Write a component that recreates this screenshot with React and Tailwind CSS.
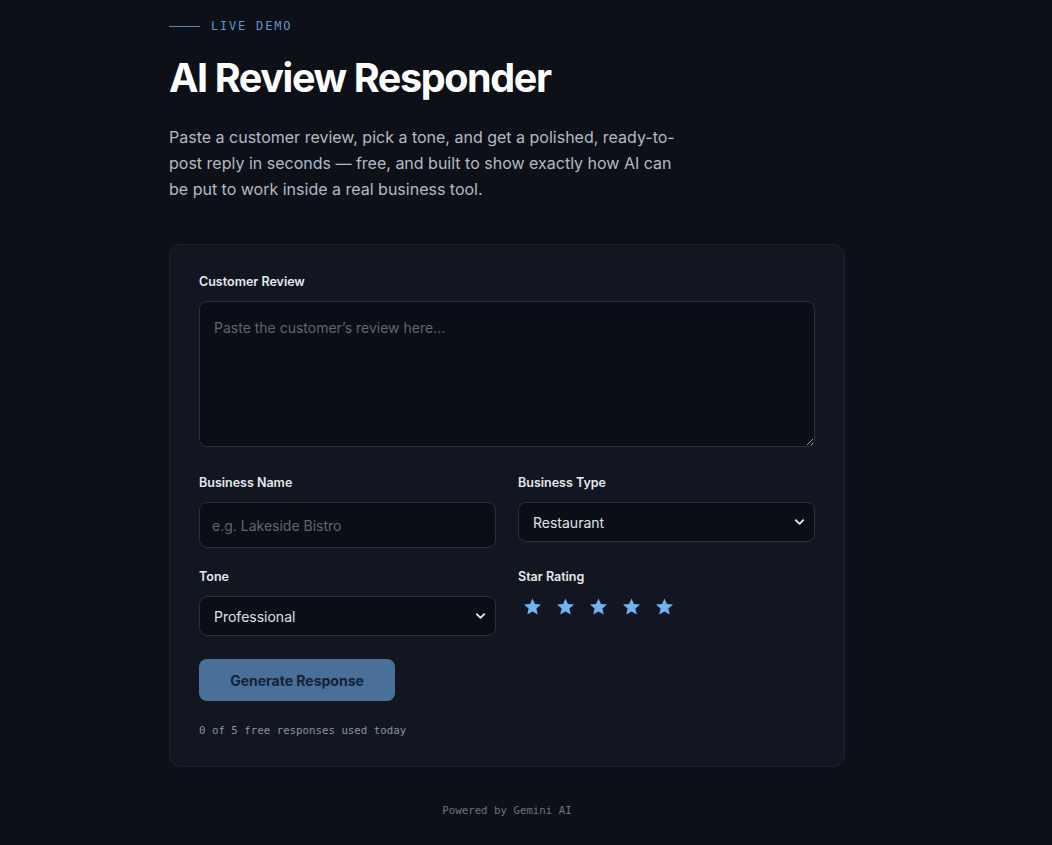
import React, { useState } from "react";
import { ChevronDown } from "lucide-react";

const sans = "font-['Inter','Noto_Sans',sans-serif]";
const mono = "font-['DejaVu_Sans_Mono','Liberation_Mono',monospace]";

function Field({ label, children }) {
  return (
    <div className="flex flex-col">
      <label className="text-[12.5px] font-semibold text-[#e6e9ee] mb-[10px] leading-[18px]">
        {label}
      </label>
      {children}
    </div>
  );
}

function Select({ value, options }) {
  return (
    <div className="relative">
      <select
        defaultValue={value}
        className="w-full h-[40px] appearance-none rounded-lg border border-[#2a303b] bg-[#0b0e14] pl-[14px] pr-8 text-[14px] text-[#dfe3e9] outline-none"
      >
        {options.map((o) => (
          <option key={o}>{o}</option>
        ))}
      </select>
      <ChevronDown
        size={15}
        strokeWidth={3}
        className="pointer-events-none absolute right-[8px] top-1/2 -translate-y-1/2 text-[#e6e9ee]"
      />
    </div>
  );
}

function Stars({ rating = 5 }) {
  return (
    <div className="flex items-center gap-[14px] pl-[5px] pt-[1px]">
      {[1, 2, 3, 4, 5].map((n) => (
        <svg key={n} width="19" height="19" viewBox="0 0 24 24" className={n <= rating ? "text-[#6cb6f5]" : "text-[#334155]"}>
          <path
            fill="currentColor"
            d="M12 1.8l3.05 7.1 7.7.7-5.84 5.07 1.75 7.53L12 18.2l-6.66 4l1.75-7.53L1.25 9.6l7.7-.7z"
          />
        </svg>
      ))}
    </div>
  );
}

export default function App() {
  const [used] = useState(0);

  return (
    <div className={`min-h-screen bg-[#0d1117] ${sans}`}>
      <div className="w-[676px] ml-[169px] pt-[17px] pb-[28px]">
        {/* eyebrow */}
        <div className="flex items-center gap-[11px]">
          <span className="block w-[31px] h-px bg-[#4f86bf]" />
          <span className={`${mono} text-[12px] tracking-[0.15em] text-[#5d93cc]`}>LIVE DEMO</span>
        </div>

        <h1 className="mt-[19px] text-[39.5px] leading-[48px] font-bold tracking-[-0.035em] text-white">
          AI Review Responder
        </h1>

        <p className="mt-[22px] max-w-[520px] text-[16px] leading-[26px] text-[#b3bac5]">
          Paste a customer review, pick a tone, and get a polished, ready-to-post reply in seconds — free, and built
          to show exactly how AI can be put to work inside a real business tool.
        </p>

        {/* form card */}
        <div className="mt-[42px] rounded-xl border border-[#1d232d] bg-[#111620] px-[29px] pt-[28px] pb-[27px]">
          <Field label="Customer Review">
            <textarea
              placeholder="Paste the customer’s review here..."
              className="h-[146px] resize-y rounded-lg border border-[#2a303b] bg-[#0b0e14] px-[14px] py-[15px] text-[14px] text-[#dfe3e9] placeholder:text-[#5f6672] outline-none"
            />
          </Field>

          <div className="mt-[27px] grid grid-cols-2 gap-x-[22px] gap-y-[20px]">
            <Field label="Business Name">
              <input
                placeholder="e.g. Lakeside Bistro"
                className="h-[46px] rounded-lg border border-[#2a303b] bg-[#0b0e14] px-[12px] text-[14px] text-[#dfe3e9] placeholder:text-[#5f6672] outline-none"
              />
            </Field>
            <Field label="Business Type">
              <Select value="Restaurant" options={["Restaurant", "Cafe", "Retail", "Salon", "Hotel", "Other"]} />
            </Field>
            <Field label="Tone">
              <Select value="Professional" options={["Professional", "Friendly", "Apologetic", "Casual"]} />
            </Field>
            <Field label="Star Rating">
              <Stars rating={5} />
            </Field>
          </div>

          <button className="mt-[23px] h-[42px] w-[196px] rounded-lg bg-[#4a709a] text-[14px] font-bold text-[#12223a]">
            Generate Response
          </button>

          <p className={`${mono} mt-[22px] text-[10.75px] text-[#8b94a1]`}>
            {used} of 5 free responses used today
          </p>
        </div>

        <p className={`${mono} mt-[36px] text-center text-[10.75px] text-[#6b7280]`}>Powered by Gemini AI</p>
      </div>
    </div>
  );
}
